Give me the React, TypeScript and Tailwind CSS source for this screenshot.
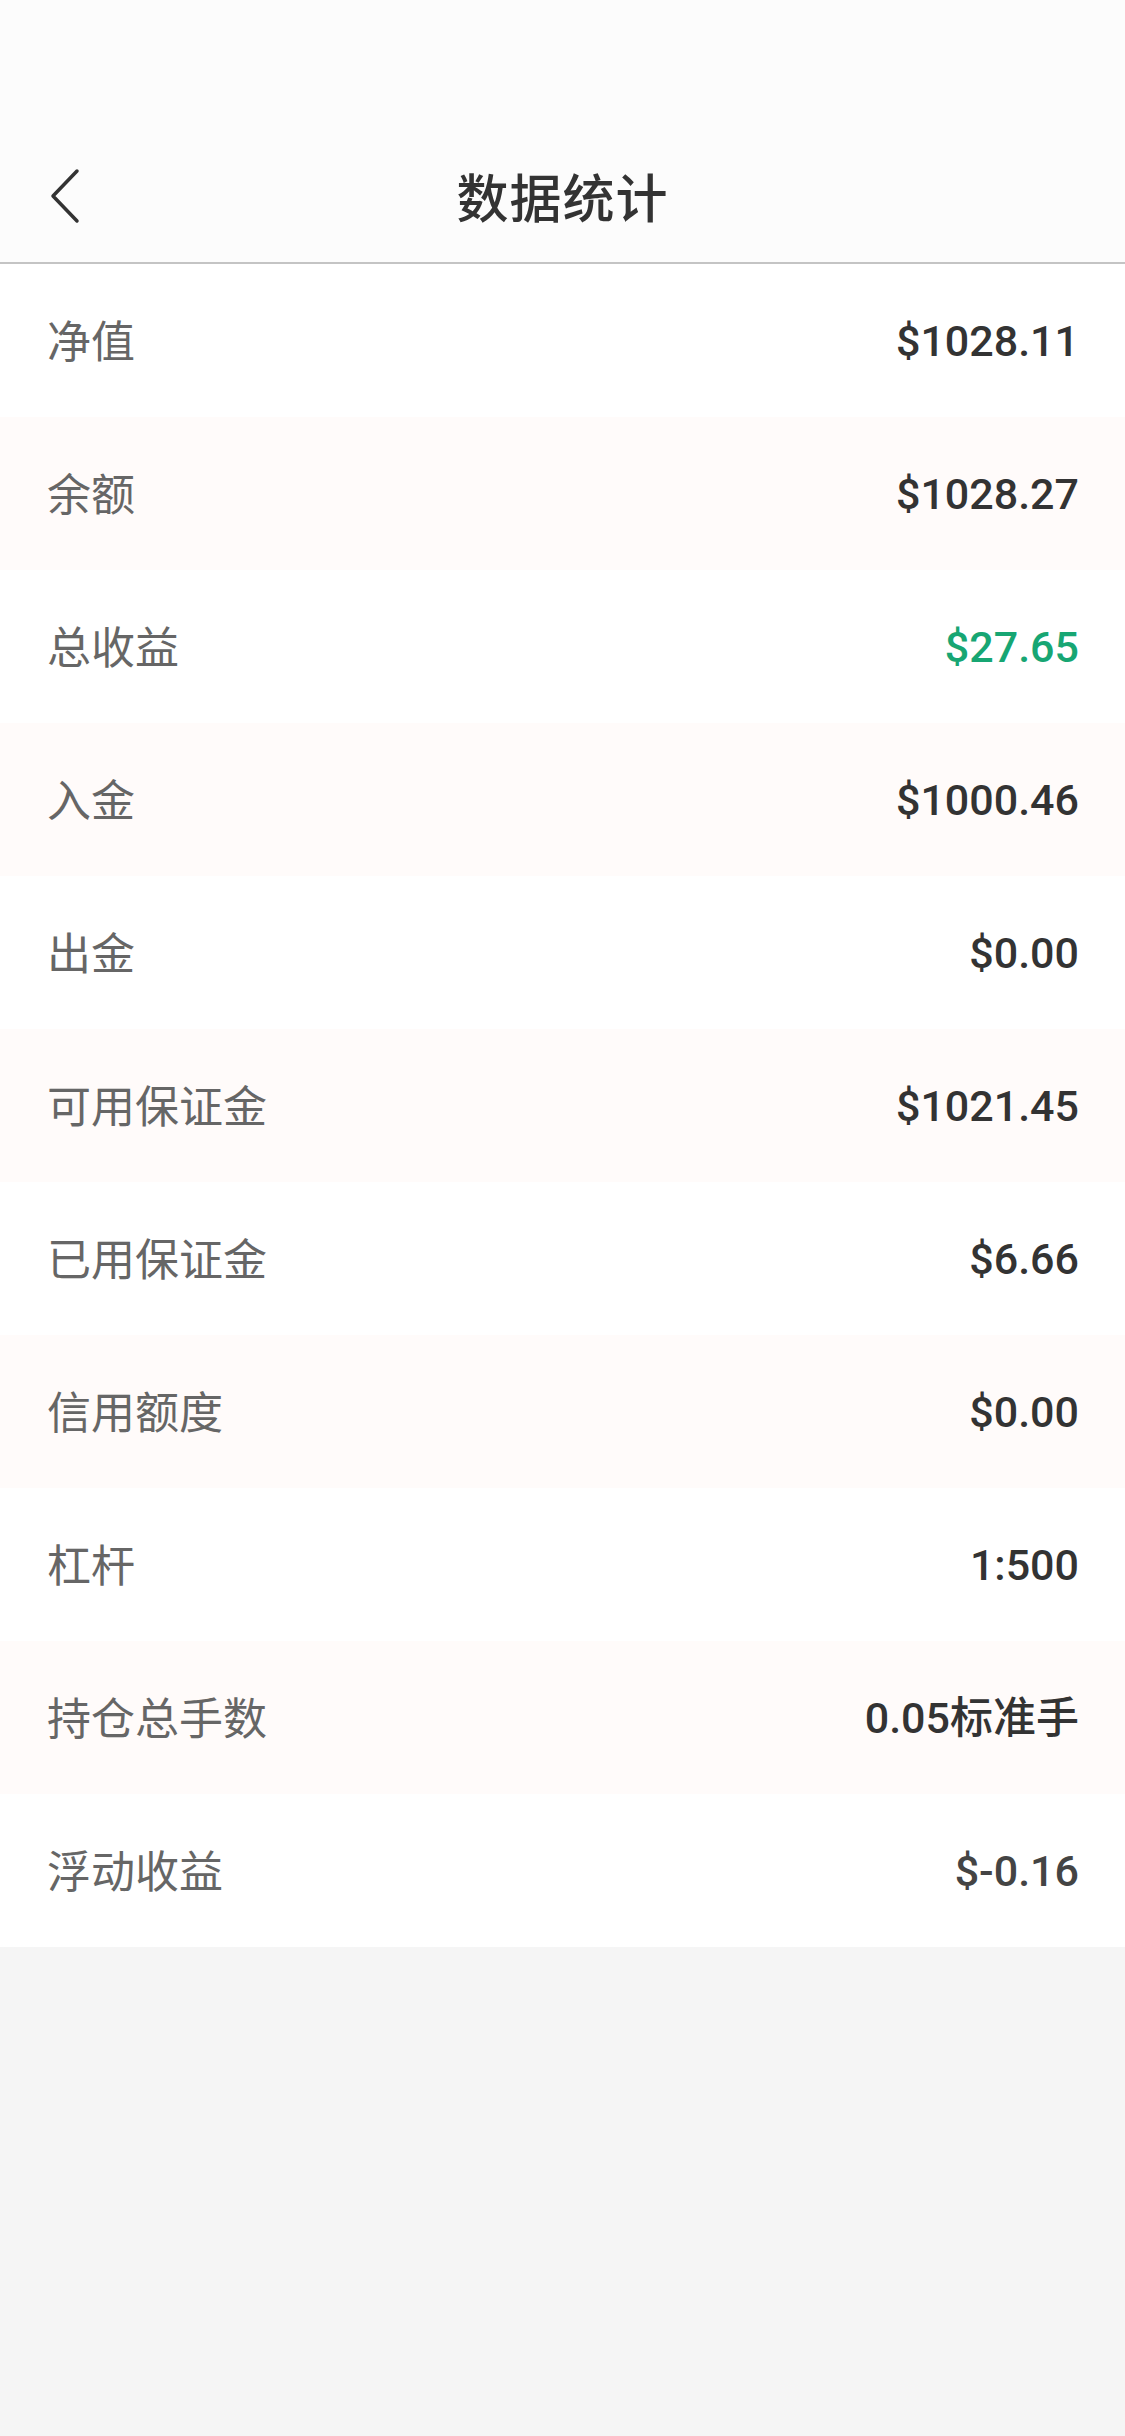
import { useState } from "react";

type Stat = { label: string; value: string; tone?: "up" | "muted" };

const stats: Stat[] = [
  { label: "净值", value: "$1028.11" },
  { label: "余额", value: "$1028.27" },
  { label: "总收益", value: "$27.65", tone: "up" },
  { label: "入金", value: "$1000.46" },
  { label: "出金", value: "$0.00" },
  { label: "可用保证金", value: "$1021.45" },
  { label: "已用保证金", value: "$6.66" },
  { label: "信用额度", value: "$0.00" },
  { label: "杠杆", value: "1:500" },
  { label: "持仓总手数", value: "0.05标准手" },
  { label: "浮动收益", value: "$-0.16", tone: "muted" },
];

const font = {
  fontFamily: "Roboto, 'Noto Sans CJK SC', sans-serif",
};

export default function App() {
  const [rows] = useState(stats);

  return (
    <div className="min-h-screen bg-[#f5f5f5]" style={font}>
      {/* Header */}
      <header className="bg-[#fcfcfc] border-b-2 border-[#c4c4c4] pt-[130px]">
        <div className="relative h-[132px] flex items-center justify-center">
          <button className="absolute left-[44px] top-1/2 -translate-y-1/2 p-1">
            <svg width="36" height="58" viewBox="0 0 36 58" fill="none">
              <path
                d="M29 4 L5 29 L29 54"
                stroke="#333333"
                strokeWidth="3.5"
                strokeLinecap="round"
                strokeLinejoin="round"
              />
            </svg>
          </button>
          <h1
            className="text-[52px] font-medium text-[#333333] tracking-[1px]"
            style={{ fontFamily: "'Noto Sans CJK SC', sans-serif" }}
          >
            数据统计
          </h1>
        </div>
      </header>

      {/* Stats list */}
      <main>
        {rows.map((row, i) => (
          <div
            key={row.label}
            className={
              "h-[153px] flex items-center justify-between pl-[47px] pr-[46px] " +
              (i % 2 === 1 ? "bg-[#fffbfa]" : "bg-white")
            }
          >
            <span
              className="text-[44px] text-[#666666] -mt-[3px]"
              style={{ fontFamily: "'Noto Sans CJK SC', sans-serif" }}
            >
              {row.label}
            </span>
            <span
              className={
                "text-[43px] font-medium mt-[2px] " +
                (row.tone === "up"
                  ? "text-[#17a673]"
                  : row.tone === "muted"
                  ? "text-[#444444]"
                  : "text-[#333333]")
              }
            >
              {row.value}
            </span>
          </div>
        ))}
      </main>
    </div>
  );
}
